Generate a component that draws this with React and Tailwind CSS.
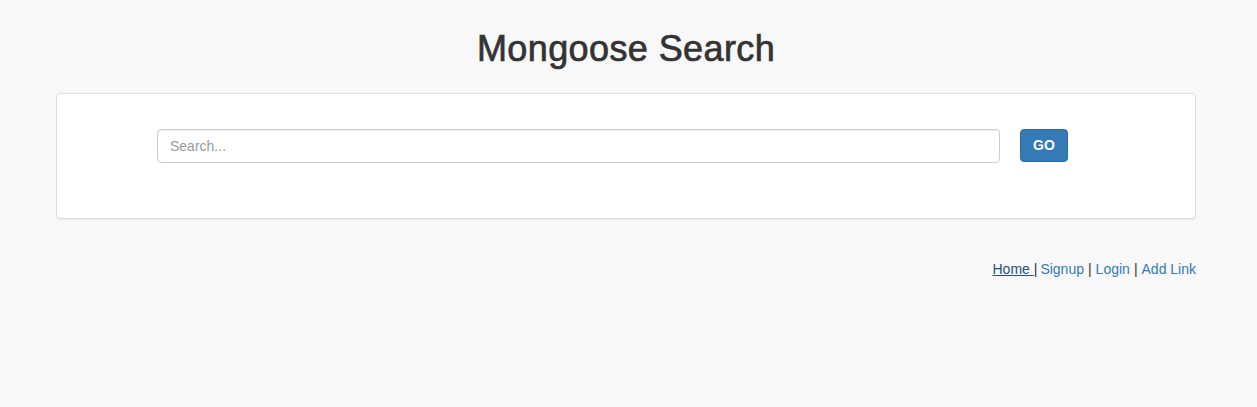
export default function App() {
  return (
    <div
      className="min-h-[407px] bg-[#f8f8f8] text-[#333] text-[14px]"
      style={{ fontFamily: '"Liberation Sans", Arial, sans-serif' }}
    >
      <div className="ml-[56px] w-[1140px] pt-[29px]">
        <h1 className="text-center text-[36px] leading-[40px] font-normal tracking-[0.4px] [-webkit-text-stroke:0.7px_#333]">
          Mongoose Search
        </h1>

        <div className="mt-[24px] h-[126px] bg-white border border-[#dddddd] rounded-[4px] shadow-[0_1px_1px_rgba(0,0,0,0.05)]">
          <div className="flex items-start pt-[35px] pl-[100px]">
            <input
              type="text"
              placeholder="Search..."
              className="w-[843px] h-[34px] px-[12px] border border-[#cccccc] rounded-[4px] bg-white text-[14px] text-[#555] placeholder:text-[#999] shadow-[inset_0_1px_1px_rgba(0,0,0,0.075)] outline-none"
            />
            <button className="ml-[20px] w-[48px] h-[33px] bg-[#337ab7] border border-[#2e6da4] rounded-[4px] text-white text-[14px] font-bold">
              GO
            </button>
          </div>
        </div>

        <div className="mt-[40px] flex justify-end text-[14px] leading-[20px] whitespace-pre">
          <a href="#" className="text-[#23527c] underline">Home </a>
          <span>|</span>
          <a href="#" className="text-[#337ab7] ml-[3px]">Signup</a>
          <span className="px-[4px]">|</span>
          <a href="#" className="text-[#337ab7]">Login</a>
          <span className="px-[4px]">|</span>
          <a href="#" className="text-[#337ab7]">Add Link</a>
        </div>
      </div>
    </div>
  );
}
